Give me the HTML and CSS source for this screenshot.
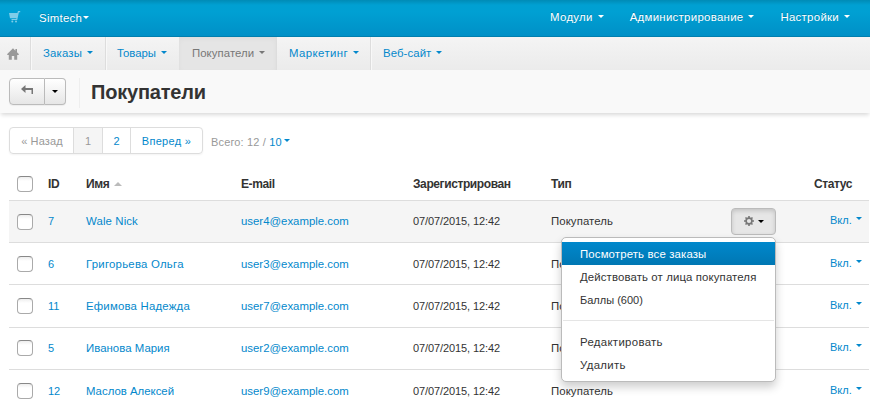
FILE: index.html
```html
<!DOCTYPE html>
<html lang="ru">
<head>
<meta charset="utf-8">
<title>Покупатели</title>
<link rel="stylesheet" href="styles.css">
</head>
<body>
<header class="topbar">
  <svg class="cart" width="12" height="12" viewBox="0 0 12 12"><path d="M0 2h8.400L9 0h2.200v1.200H9.900L8.200 9H2.500V8h4.800l.2-.8H1z"/><circle cx="3.300" cy="10.500" r="1"/><circle cx="7" cy="10.500" r="1"/></svg>
  <a class="brand">Simtech<i class="caret"></i></a>
  <nav class="settings">
    <a class="s-mod">Модули<i class="caret"></i></a>
    <a class="s-adm">Администрирование<i class="caret"></i></a>
    <a class="s-set">Настройки<i class="caret"></i></a>
  </nav>
</header>
<nav class="subnav">
  <a class="home"><svg width="12" height="12" viewBox="0 0 12 12"><path d="M6 .3 0 6.300l.6.7h1.200v4.700h3V8h2.400v3.700h3V7h1.200l.6-.7-2-2V1H8.400v1.700z"/></svg></a>
  <a class="n-orders">Заказы<i class="caret"></i></a>
  <a class="n-goods">Товары<i class="caret"></i></a>
  <a class="n-cust active">Покупатели<i class="caret"></i></a>
  <a class="n-mark">Маркетинг<i class="caret"></i></a>
  <a class="n-site">Веб-сайт<i class="caret"></i></a>
</nav>
<section class="heading">
  <div class="btn-group">
    <button class="back"><svg width="13" height="10" viewBox="0 0 13 10"><path d="M0 4 4.500 0v3H12v6h-1.500V5h-6v3z"/></svg></button>
    <button class="more"><i class="caret"></i></button>
  </div>
  <h1>Покупатели</h1>
</section>
<main>
  <div class="pager">
    <div class="pages"><a class="muted prev">« Назад</a><a class="muted current">1</a><a class="two">2</a><a class="next">Вперед »</a></div>
    <span class="total">Всего: 12 / <a>10<i class="caret"></i></a></span>
  </div>
  <div class="table">
    <div class="row th"><span><i class="check"></i></span><b>ID</b><b>Имя<i class="sort"></i></b><b>E-mail</b><b>Зарегистрирован</b><b>Тип</b><span></span><b class="status">Статус</b></div>
    <div class="row hover"><span><i class="check"></i></span><a>7</a><a class="w">Wale Nick</a><a class="mail">user4@example.com</a><span class="date">07/07/2015, 12:42</span><span class="type">Покупатель</span>
      <div class="tools"><button class="gear"><svg width="10" height="10" viewBox="0 0 10 10"><circle cx="5" cy="5" r="2.900"/><path d="M5 0v2M5 8v2M0 5h2M8 5h2M1.500 1.500l1.300 1.300M7.200 7.200l1.300 1.300M1.500 8.500l1.300-1.300M7.200 2.800l1.300-1.300"/></svg><i class="caret"></i></button>
        <div class="menu"><a class="selected m1">Посмотреть все заказы</a><a class="m2">Действовать от лица покупателя</a><a>Баллы (600)</a><hr><a class="m4">Редактировать</a><a class="m5">Удалить</a></div>
      </div>
      <a class="state">Вкл.<i class="caret"></i></a></div>
    <div class="row low"><span><i class="check"></i></span><a>6</a><a class="g">Григорьева Ольга</a><a class="mail">user3@example.com</a><span class="date">07/07/2015, 12:42</span><span class="type">Покупатель</span><span></span><a class="state">Вкл.<i class="caret"></i></a></div>
    <div class="row tall"><span><i class="check"></i></span><a>11</a><a class="e">Ефимова Надежда</a><a class="mail">user7@example.com</a><span class="date">07/07/2015, 12:42</span><span class="type">Покупатель</span><span></span><a class="state">Вкл.<i class="caret"></i></a></div>
    <div class="row high"><span><i class="check"></i></span><a>5</a><a class="i">Иванова Мария</a><a class="mail">user2@example.com</a><span class="date">07/07/2015, 12:42</span><span class="type">Покупатель</span><span></span><a class="state">Вкл.<i class="caret"></i></a></div>
    <div class="row low"><span><i class="check"></i></span><a>12</a><a class="m">Маслов Алексей</a><a class="mail">user9@example.com</a><span class="date">07/07/2015, 12:42</span><span class="type">Покупатель</span><span></span><a class="state">Вкл.<i class="caret"></i></a></div>
  </div>
</main>
</body>
</html>
```
FILE: styles.css
```css
* { box-sizing: border-box; }
body { margin: 0; height: 405px; overflow: hidden; background: #fff; font: 11px/16px "Liberation Sans", Arial, sans-serif; color: #333; }
a { color: #0388cc; white-space: nowrap; }
button { font: inherit; padding: 0; display: flex; align-items: center; justify-content: center; }
.caret { display: inline-block; border: 3px solid transparent; border-top-color: currentColor; border-bottom: 0; margin-left: 5px; vertical-align: 3px; }

.topbar { height: 37px; display: flex; align-items: flex-start; background: linear-gradient(#008bb6 0, #00a0d2 5px, #00a0d3 12px, #0090c7 100%); border-bottom: 1px solid #007fae; }
.topbar a { color: #fff; text-shadow: 0 -1px 0 rgba(0,0,0,.2); font-size: 11.4px; letter-spacing: .3px; }
.cart { margin: 11px 0 0 9px; fill: #7fcde8; }
.topbar .brand { margin: 10px 0 0 18px; }
.brand .caret { margin-left: 1px; }
.settings { display: flex; margin: 9px 0 0 auto; padding-right: 20px; gap: 26px; }

.subnav { height: 33px; display: flex; background: linear-gradient(#f4f4f4, #ebebeb); }
.subnav a { height: 33px; padding: 8px 0 0 12px; border-right: 1px solid #ddd; box-shadow: 1px 0 #f8f8f8; font-size: 11.4px; }
.subnav .home { width: 31px; padding: 11px 0 0 7px; }
.home svg { display: block; fill: #999; }
.subnav .n-orders { width: 75px; letter-spacing: .15px; }
.subnav .n-goods { width: 73px; padding-left: 11px; border-right: 0; letter-spacing: -.05px; }
.subnav .n-cust { width: 98px; padding-left: 13px; letter-spacing: .05px; }
.subnav .n-mark { width: 94px; letter-spacing: .42px; }
.subnav .n-site { border-right: 0; box-shadow: none; letter-spacing: .08px; }
.subnav .active { color: #777; background: #e5e5e5; box-shadow: inset 0 2px 5px rgba(0,0,0,.04); }

.heading { height: 43px; display: flex; align-items: flex-start; padding: 8px 0 0 9px; background: #f9f9f9; box-shadow: 0 3px 4px -1px rgba(0,0,0,.15); }
.btn-group { display: flex; width: 57px; height: 27px; }
.btn-group button { border: 1px solid #bbb; background: linear-gradient(#fff, #e6e6e6); box-shadow: 0 1px 1px rgba(0,0,0,.05); }
.btn-group .back { width: 36px; border-radius: 4px 0 0 4px; padding-bottom: 3px; }
.back svg { fill: #777; }
.btn-group .more { width: 21px; border-left: 0; border-radius: 0 4px 4px 0; }
.more .caret, .gear .caret { margin: 0; color: #000; }
h1 { margin: 0 0 0 13px; padding: 0 0 0 11px; height: 30px; border-left: 1px solid #eee; font-size: 20px; line-height: 28px; letter-spacing: -.2px; }

main { padding: 14px 0 0 9px; }
.pager { display: flex; height: 27px; }
.pages { display: flex; border: 1px solid #ddd; border-radius: 4px; width: 194px; box-shadow: 0 1px 2px rgba(0,0,0,.05); }
.pages a { height: 25px; line-height: 27px; text-align: center; border-left: 1px solid #ddd; }
.pages .prev { width: 63px; padding-left: 1px; border: 0; letter-spacing: .15px; }
.pages .current { width: 29px; background: #f5f5f5; }
.pages .two { width: 28px; }
.pages .next { flex: 1; letter-spacing: .3px; }
.pages .muted { color: #999; }
.total { color: #999; margin: 7px 0 0 8px; letter-spacing: .15px; }
.total .caret { margin-left: 2px; vertical-align: 4px; }

.table { padding-top: 14px; }
.row { width: 860px; height: 42px; display: grid; grid-template-columns: 39px 38px 155px 172px 138px 171px 108px 39px; align-items: center; border-top: 1px solid #ddd; }
.row.th { height: 32px; border: 0; }
.row.th .check { margin-top: -1px; }
.row.tall { height: 43px; padding-bottom: 1px; }
.row.high { padding-bottom: 2px; }
.row.high .check { margin-top: 0; }
.row.th b { white-space: nowrap; font-size: 12px; letter-spacing: -.4px; }
.row.hover { background: #f5f5f5; }
.hover > a, .hover > span:not(:first-child) { margin-top: -2px; }
.w, .g, .e, .i, .m, .mail, .type { font-size: 11.4px; }
.w { letter-spacing: .12px; }
.g { letter-spacing: .23px; }
.e { letter-spacing: .2px; }
.i { letter-spacing: .03px; }
.m { letter-spacing: 0; }
.mail { letter-spacing: 0; }
.date { letter-spacing: -.1px; }
.type { letter-spacing: .08px; }
.check { display: block; width: 16px; height: 16px; margin: 1px 0 0 8px; border: 1px solid #aaa; border-top-color: #888; border-radius: 4px; background: linear-gradient(#eee, #fff 4px); }
.sort { display: inline-block; border: 4px solid transparent; border-top: 0; border-bottom-color: #bbb; margin-left: 5px; vertical-align: 2px; }
.row.th .status { margin-left: -16px; }
.row .state { margin: -3px 0 0; }
.row.low .state { margin-top: -1px; }
.row.tall .state { margin-top: -1px; }
.row.high .state { margin-top: -1px; }
.state .caret { margin-left: 4px; vertical-align: 4px; }
.tools { position: relative; }
.gear { width: 45px; height: 27px; margin-left: 9px; gap: 4px; border: 1px solid #bbb; border-radius: 4px; background: #e6e6e6; box-shadow: inset 0 2px 4px rgba(0,0,0,.15); }
.gear svg { fill: none; stroke: #777; stroke-width: 1.600; margin-bottom: 2px; }
.menu { position: absolute; z-index: 2; left: -161px; top: 29px; width: 215px; height: 145px; padding: 4px 0; background: #fff; border: 1px solid #bbb; border-radius: 5px; box-shadow: 0 5px 10px rgba(0,0,0,.2); }
.menu a { display: block; height: 23px; padding-left: 18px; line-height: 24px; color: #333; }
.menu .selected { color: #fff; background: linear-gradient(#0088cc, #0077b3); }
.menu .m1, .menu .m2, .menu .m4, .menu .m5 { font-size: 11.4px; }
.menu .m1 { letter-spacing: .14px; }
.menu .m2 { letter-spacing: .12px; }
.menu .m4, .menu .m5 { letter-spacing: .32px; }
.menu hr { height: 1px; border: 0; background: #e5e5e5; margin: 9px 1px; }
```
